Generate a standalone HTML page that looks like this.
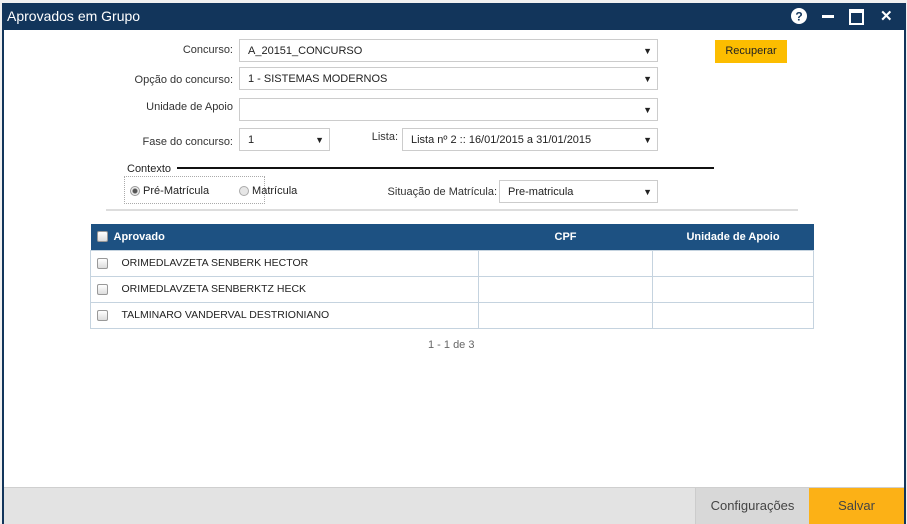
<!DOCTYPE html>
<html><head><meta charset="utf-8"><style>
*{box-sizing:border-box;margin:0;padding:0}
body{width:907px;height:524px;background:#f0f0f0;font-family:"Liberation Sans",sans-serif;font-size:11px;color:#222;position:relative;overflow:hidden}
.win{position:absolute;left:2px;top:3px;width:904px;height:521px;background:#fff;border-left:2px solid #12355b;border-right:2px solid #12355b}
.c{position:absolute;left:-3px;top:0;width:900px;height:521px}
.title{position:absolute;left:0;top:0;right:0;height:27px;background:#12355b;color:#fff;font-size:14px;line-height:27px;padding-left:3px}
.ab{position:absolute;font-size:11px}
.lbl{position:absolute;text-align:right;font-size:11px;color:#333}
.sel{position:absolute;height:23px;border:1px solid #ccc;background:#fff;font-size:11px;line-height:23px;padding-left:8px}
.sel:after{content:"▼";position:absolute;right:5px;top:0;font-size:9px;color:#222}
.btn{position:absolute;background:#fcbd00;font-size:11px;text-align:center;line-height:23px}
table{position:absolute;left:89px;top:221px;width:724px;border-collapse:collapse}
th{background:#1d5182;color:#fff;font-weight:bold;font-size:11px;height:26px;text-align:left;border:none}
td{border:1px solid #c5d3df;height:26px;font-size:10.5px}
.cb{display:inline-block;width:11px;height:11px;border:1px solid #999;border-radius:2px;background:linear-gradient(#fff,#ddd);vertical-align:middle}
.footer{position:absolute;left:0;right:0;bottom:0;height:37px;background:#e3e3e3;border-top:1px solid #cfcfcf}
</style></head><body>
<div class="win">
<div class="title">Aprovados em Grupo
<svg style="position:absolute;left:787px;top:5px" width="16" height="16"><circle cx="8" cy="8" r="8" fill="#fff"/><text x="8" y="12.5" font-size="12" font-weight="bold" text-anchor="middle" fill="#12355b" font-family="Liberation Sans">?</text></svg>
<div style="position:absolute;left:818px;top:12px;width:12px;height:3px;background:#fff"></div>
<div style="position:absolute;left:845px;top:6px;width:15px;height:16px;border:2px solid #fff;border-top-width:4px"></div>
<div style="position:absolute;left:876px;top:0;font-weight:bold;font-size:15px">✕</div>
</div>
<div class="c">
<div class="lbl" style="left:100px;width:132px;top:41px">Concurso:</div>
<div class="sel" style="left:238px;top:36px;width:419px">A_20151_CONCURSO</div>
<div class="btn" style="left:714px;top:37px;width:72px">Recuperar</div>
<div class="lbl" style="left:100px;width:132px;top:71px">Opção do concurso:</div>
<div class="sel" style="left:238px;top:64px;width:419px">1 - SISTEMAS MODERNOS</div>
<div class="lbl" style="left:100px;width:132px;top:98px">Unidade de Apoio</div>
<div class="sel" style="left:238px;top:95px;width:419px"></div>
<div class="lbl" style="left:100px;width:132px;top:133px">Fase do concurso:</div>
<div class="sel" style="left:238px;top:125px;width:91px">1</div>
<div class="lbl" style="left:360px;width:37px;top:128px">Lista:</div>
<div class="sel" style="left:401px;top:125px;width:256px">Lista nº 2 :: 16/01/2015 a 31/01/2015</div>
<div class="ab" style="left:126px;top:160px">Contexto</div>
<div style="position:absolute;left:176px;top:164px;width:537px;height:2px;background:#111"></div>
<div style="position:absolute;left:123px;top:173px;width:141px;height:28px;border:1px dotted #aaa"></div>
<div class="ab" style="left:129px;top:182px"><span style="display:inline-block;width:10px;height:10px;border-radius:50%;border:1px solid #999;background:radial-gradient(#555 2px,#eee 3px);vertical-align:middle"></span> Pré-Matrícula</div>
<div class="ab" style="left:238px;top:182px"><span style="display:inline-block;width:10px;height:10px;border-radius:50%;border:1px solid #aaa;background:#e6e6e6;vertical-align:middle"></span> Matrícula</div>
<div class="lbl" style="left:370px;width:126px;top:183px">Situação de Matrícula:</div>
<div class="sel" style="left:498px;top:177px;width:159px">Pre-matricula</div>
<div style="position:absolute;left:105px;top:206px;width:692px;height:2px;background:#ddd"></div>
<table>
<tr><th style="width:23px;text-align:center"><span class="cb"></span></th><th style="width:365px">Aprovado</th><th style="width:174px;text-align:center">CPF</th><th style="text-align:center">Unidade de Apoio</th></tr>
<tr><td style="text-align:center;border-right:none"><span class="cb"></span></td><td style="border-left:none;padding-left:8px">ORIMEDLAVZETA SENBERK HECTOR</td><td></td><td></td></tr>
<tr><td style="text-align:center;border-right:none"><span class="cb"></span></td><td style="border-left:none;padding-left:8px">ORIMEDLAVZETA SENBERKTZ HECK</td><td></td><td></td></tr>
<tr><td style="text-align:center;border-right:none"><span class="cb"></span></td><td style="border-left:none;padding-left:8px">TALMINARO VANDERVAL DESTRIONIANO</td><td></td><td></td></tr>
</table>
<div class="ab" style="left:427px;top:336px;color:#666">1 - 1 de 3</div>
</div>
<div class="footer">
<div style="position:absolute;left:691px;top:0;width:114px;height:36px;background:#d8d8d8;border-left:1px solid #ccc;text-align:center;line-height:36px;font-size:13px;color:#444">Configurações</div>
<div style="position:absolute;left:805px;top:0;right:0;height:36px;background:#fcb116;text-align:center;line-height:36px;font-size:13px;color:#444">Salvar</div>
</div>
</div>
</body></html>
